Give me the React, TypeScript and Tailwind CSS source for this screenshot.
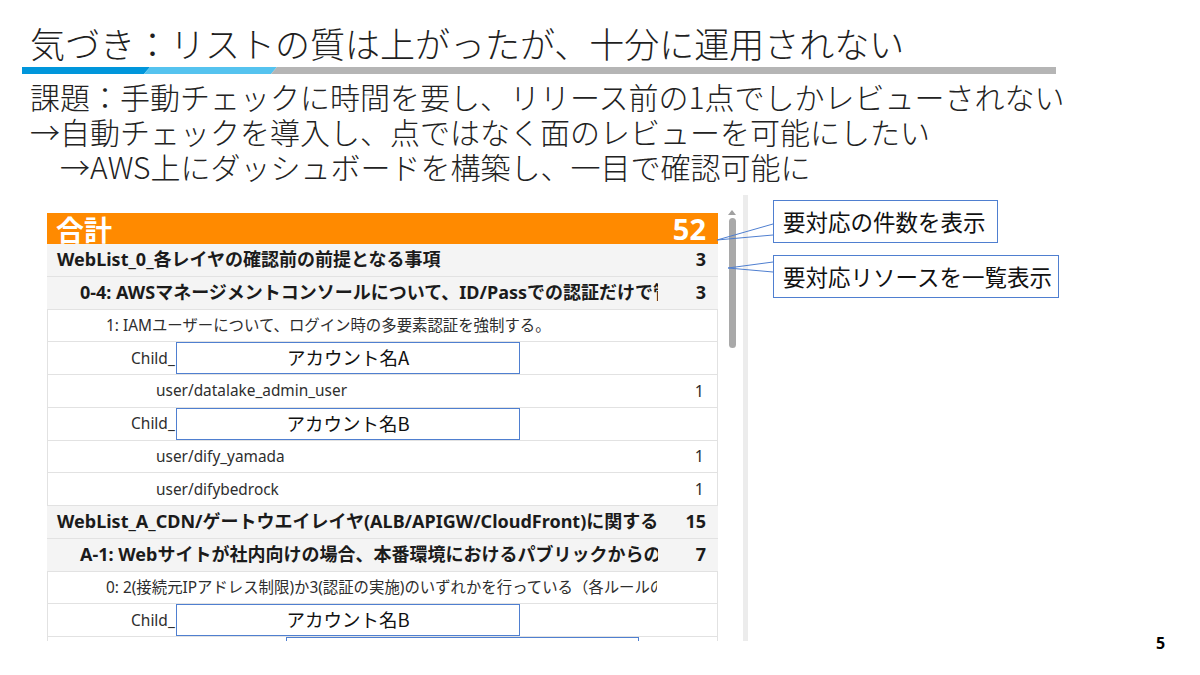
import React from 'react';

const JP = "font-['Noto_Sans_CJK_JP',sans-serif]";
const TABLE = "font-['Noto_Sans','Noto_Sans_CJK_JP',sans-serif]";

type Row =
  | { kind: 'group'; pad: string; label: string; count: string }
  | { kind: 'rule'; label: string }
  | { kind: 'child'; account: string }
  | { kind: 'user'; label: string; count: string };

const rows: Row[] = [
  { kind: 'group', pad: 'pl-[10px]', label: 'WebList_0_各レイヤの確認前の前提となる事項', count: '3' },
  { kind: 'group', pad: 'pl-[33px]', label: '0-4: AWSマネージメントコンソールについて、ID/Passでの認証だけで管理者権限を持つユーザーがログインできない', count: '3' },
  { kind: 'rule', label: '1: IAMユーザーについて、ログイン時の多要素認証を強制する。' },
  { kind: 'child', account: 'アカウント名A' },
  { kind: 'user', label: 'user/datalake_admin_user', count: '1' },
  { kind: 'child', account: 'アカウント名B' },
  { kind: 'user', label: 'user/dify_yamada', count: '1' },
  { kind: 'user', label: 'user/difybedrock', count: '1' },
  { kind: 'group', pad: 'pl-[10px]', label: 'WebList_A_CDN/ゲートウエイレイヤ(ALB/APIGW/CloudFront)に関する確認事項', count: '15' },
  { kind: 'group', pad: 'pl-[33px]', label: 'A-1: Webサイトが社内向けの場合、本番環境におけるパブリックからのアクセスを制限している', count: '7' },
  { kind: 'rule', label: '0: 2(接続元IPアドレス制限)か3(認証の実施)のいずれかを行っている（各ルールの詳細）' },
  { kind: 'child', account: 'アカウント名B' },
];

function TableRow({ row }: { row: Row }) {
  if (row.kind === 'group') {
    return (
      <div className="flex h-[32.75px] items-center bg-[#f4f4f4] border-b border-[#e2e2e2] text-[18px] font-bold text-[#1b1b1b]">
        <div className={`flex-1 min-w-0 overflow-hidden whitespace-nowrap ${row.pad}`}>{row.label}</div>
        <div className="w-[60px] text-right pr-[12px]">{row.count}</div>
      </div>
    );
  }
  if (row.kind === 'rule') {
    return (
      <div className="flex h-[32.75px] items-center bg-white border-b border-x border-[#e2e2e2] text-[15.4px] text-[#2e2e2e]">
        <div className="flex-1 min-w-0 overflow-hidden whitespace-nowrap pl-[58px]">{row.label}</div>
        <div className="w-[60px]" />
      </div>
    );
  }
  if (row.kind === 'child') {
    return (
      <div className="relative flex h-[32.75px] items-center bg-white border-b border-x border-[#e2e2e2] text-[15.5px] text-[#2e2e2e]">
        <div className="pl-[83px]">Child_</div>
        <div className={`absolute left-[128px] top-0 w-[344px] h-[32px] border border-[#4f7fd0] bg-white flex items-center justify-center text-[18.5px] text-[#111] ${JP}`}>
          {row.account}
        </div>
      </div>
    );
  }
  return (
    <div className="flex h-[32.75px] items-center bg-white border-b border-x border-[#e2e2e2] text-[15.4px] text-[#2e2e2e]">
      <div className="flex-1 min-w-0 overflow-hidden whitespace-nowrap pl-[108px]">{row.label}</div>
      <div className="w-[60px] text-right pr-[13px] text-[16px]">{row.count}</div>
    </div>
  );
}

export default function App() {
  return (
    <div className={`relative w-[1200px] h-[675px] overflow-hidden bg-white ${JP}`}>
      <h1 className="pt-[22px] pl-[30px] text-[35px] leading-[42px] font-extralight text-[#1f1f1f] whitespace-nowrap">
        気づき：リストの質は上がったが、十分に運用されない
      </h1>

      <div className="flex h-[7px] mt-[3px] ml-[22px] w-[1034px]">
        <div className="w-[128px] bg-[#0096db] [clip-path:polygon(0_0,100%_0,calc(100%-6px)_100%,0_100%)]" />
        <div className="w-[133px] -ml-[6px] bg-[#55c3ef] [clip-path:polygon(6px_0,100%_0,calc(100%-6px)_100%,0_100%)]" />
        <div className="flex-1 -ml-[6px] bg-[#b5b5b5] [clip-path:polygon(6px_0,100%_0,100%_100%,0_100%)]" />
      </div>

      <div className="mt-[5px] pl-[30px] text-[30px] leading-[35px] font-extralight text-[#222] whitespace-nowrap">
        <p>課題：手動チェックに時間を要し、リリース前の1点でしかレビューされない</p>
        <p>→自動チェックを導入し、点ではなく面のレビューを可能にしたい</p>
        <p className="pl-[30px]">→AWS上にダッシュボードを構築し、一目で確認可能に</p>
      </div>

      <div className="flex mt-[11px] h-[446px]">
        <div className={`ml-[47px] w-[671px] pt-[18px] overflow-hidden ${TABLE}`}>
          <div className="flex h-[31px] items-end justify-between bg-[#ff8a00] text-white font-bold">
            <span className={`pl-[9px] text-[28px] leading-[30px] ${JP}`}>合計</span>
            <span className="pr-[12px] text-[29px] leading-[30px]">52</span>
          </div>
          {rows.map((r, i) => (
            <TableRow key={i} row={r} />
          ))}
          <div className="relative h-[32.75px] bg-white border-x border-[#e2e2e2]">
            <div className="absolute left-[238px] top-0 w-[353px] h-[32px] border border-[#4f7fd0]" />
          </div>
        </div>

        <div className="w-[25px] flex flex-col items-center pt-[15px]">
          <div className="w-0 h-0 border-x-[4px] border-x-transparent border-b-[5px] border-b-[#a0a0a0] ml-[3px]" />
          <div className="mt-[3px] ml-[3px] w-[7px] h-[130px] rounded-full bg-[#a9a9a9]" />
        </div>

        <div className="w-[5px] bg-[#ececec]" />

        <div className="flex flex-col gap-[12px] pl-[25px] pt-[5px] text-[22.5px] text-[#111]">
          <div className="w-[225px] h-[43px] border border-[#4f7fd0] bg-white flex items-center pl-[9px] whitespace-nowrap">
            要対応の件数を表示
          </div>
          <div className="w-[286px] h-[43px] border border-[#4f7fd0] bg-white flex items-center pl-[9px] whitespace-nowrap">
            要対応リソースを一覧表示
          </div>
        </div>
      </div>

      <svg className="absolute inset-0 pointer-events-none" width="1200" height="675">
        <polyline points="773,224 717,240 773,235" fill="none" stroke="#4f7fd0" strokeWidth="1" />
        <polyline points="773,262 728,268 773,272" fill="none" stroke="#4f7fd0" strokeWidth="1" />
      </svg>

      <div className="absolute left-[1156px] top-[631px] text-[16px] font-bold text-black font-['Noto_Sans',sans-serif]">
        5
      </div>
    </div>
  );
}
